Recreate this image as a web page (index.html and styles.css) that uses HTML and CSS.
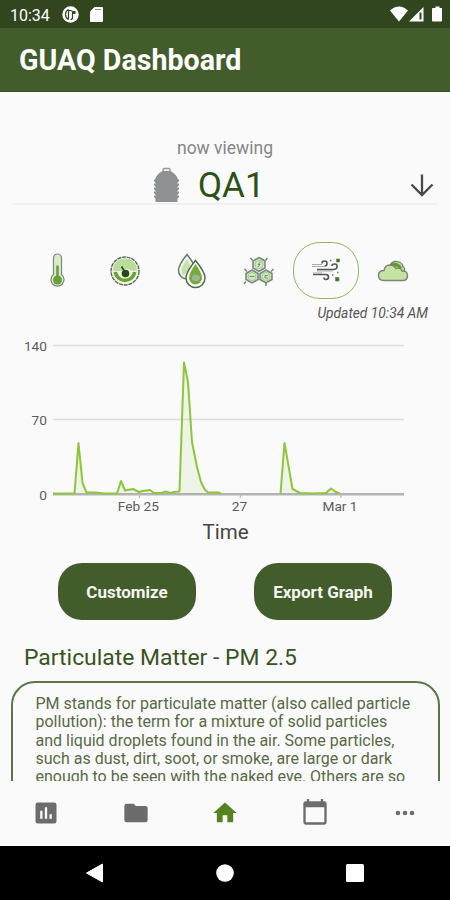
FILE: index.html
```html
<!DOCTYPE html>
<html lang="en">

<head>
    <meta charset="utf-8">
    <title>GUAQ Dashboard</title>
    <link rel="stylesheet" href="styles.css">
</head>

<body>
    <div class="status-bar">
        <span class="clock">10:34</span>
        <svg width="17" height="17" viewBox="0 0 17 17">
            <circle cx="8.500" cy="8.500" r="8.200" fill="#fff" />
            <path d="M6.500 3.500Q3.500 5 3.500 8.500t3 5M6.500 3.500v10M6.500 4.500h2.500q1.500 0 1.500 2v5q0 2-2 2" fill="none" stroke="#31451f" stroke-width="1.200" />
            <path d="M10.500 5h3v3h-3z" fill="#31451f" />
        </svg>
        <svg class="sd" width="13" height="15" viewBox="0 0 13 15">
            <path d="M4.500 0H12a1 1 0 0 1 1 1v13a1 1 0 0 1-1 1H1a1 1 0 0 1-1-1V4.500z" fill="#fff" />
            <path d="M5 2.500h6" stroke="#8b977f" stroke-width="1" />
        </svg>
        <svg class="signals" width="52" height="17" viewBox="0 0 52 17">
            <path d="M0 4.500Q9 -3.500 18 4.500L9 15.500z" fill="#fff" />
            <path d="M33.500 1v14.500H19z" fill="#fff" />
            <path d="M30.500 6.500v7" stroke="#31451f" stroke-width="2" />
            <path d="M43 2h2.500V.5h4V2H52v12.500a1 1 0 0 1-1 1h-8a1 1 0 0 1-1-1V3a1 1 0 0 1 1-1z" fill="#fff" />
        </svg>
    </div>

    <header class="app-bar">
        <h1>GUAQ Dashboard</h1>
    </header>

    <main class="content">
        <p class="viewing">now viewing</p>
        <div class="sensor">
            <svg class="sensor-icon" width="27" height="36" viewBox="0 0 27 36">
                <path d="M10 4.500V3q0-1.500 1.500-1.500h4Q17 1.500 17 3v1.500" fill="none" stroke="#97999b" stroke-width="1.500" />
                <path d="M9.500 4h8q6 3 7.500 8.500h1v1.500l-2 2.500h2V18l-2 2.500h2V22l-2 2.500h2V26l-2 2.500h2V30l-1.500 1.500V35h-22v-3.500L1 30v-1.500h2L1 26v-1.500h2L1 22v-1.500h2L1 18v-1.500h2L1 14v-1.500h1Q3.500 7 9.500 4z" fill="#8e9194" />
            </svg>
            <span class="sensor-name">QA1</span>
            <svg class="arrow" width="24" height="24" viewBox="0 0 24 24">
                <path d="M12 1.500v20M1.500 11.500L12 22l10.500-10.500" fill="none" stroke="#4a4a4a" stroke-width="2.300" />
            </svg>
        </div>

        <div class="metrics">
            <div class="metric">
                <!-- temperature -->
                <svg width="32" height="38" viewBox="0 0 32 38">
                    <path d="M11.500 22.500V6a4 4 0 0 1 8 0v16.500a6.500 6.500 0 1 1-8 0z" fill="#dcebc9" stroke="#7d877a" stroke-width="1.200" />
                    <path d="M15.500 13.500V27" stroke="#68a13a" stroke-width="2.600" />
                    <circle cx="15.500" cy="28" r="4.500" fill="#68a13a" />
                </svg>
            </div>
            <div class="metric">
                <!-- pressure gauge -->
                <svg width="32" height="32" viewBox="0 0 32 32">
                    <circle cx="16" cy="16" r="14" fill="#eef5e6" stroke="#59645a" stroke-width="1.400" stroke-dasharray="4 .8" />
                    <path d="M4 15.500a12 12 0 0 1 24 0q-6 1-10-2-6 4-14 2z" fill="#b9dc9a" />
                    <path d="M6.300 17a9.800 9.800 0 0 0 19.400 0" fill="none" stroke="#68a52f" stroke-width="3.600" />
                    <circle cx="16.500" cy="18.500" r="3.800" fill="#28481b" />
                    <path d="M16.500 18L12.500 11.500" stroke="#28481b" stroke-width="1.600" />
                </svg>
            </div>
            <div class="metric">
                <!-- humidity -->
                <svg width="32" height="38" viewBox="0 0 32 38">
                    <path d="M11 2.500Q2.500 13 2.500 18.500a8.500 8.500 0 0 0 17 0Q19.500 13 11 2.500z" fill="#f4f8ee" stroke="#68776a" stroke-width="1.500" />
                    <path d="M11 7Q5 15 5.300 19q.3 3 2.200 4.500Q14 18 14 12z" fill="#c5e1ad" />
                    <path d="M19.500 8.500Q10 20 10 26a9.500 9.500 0 0 0 19 0Q29 20 19.500 8.500z" fill="#fff" stroke="#526653" stroke-width="1.500" />
                    <path d="M19.500 12Q13 21 13 26a6.500 6.500 0 0 0 13 0Q26 21 19.500 12z" fill="#72ae35" />
                    <path d="M16 24.500q2-3 4.500-1.500 4 0 3.500 3.500-1 3-4 2.500-5 .5-4-4.500z" fill="#a2b39b" />
                </svg>
            </div>
            <div class="metric">
                <!-- compounds -->
                <svg width="32" height="32" viewBox="0 0 32 32">
                    <g fill="#d5e8c6" stroke="#76847a" stroke-width="1.500">
                        <path d="M9.500 5.500L7.500 3M22.500 5.500l2-2.500M4 16.500L1.500 14M28 16.500l2.500-2.500M3 26.500L1 29M23 27.500V31" />
                        <path d="M16 2.500l6 3.500v7l-6 3.500-6-3.500V6z" />
                        <path d="M9 15l6 3.500v6L9 28l-6-3.500v-6z" />
                        <path d="M23 15l6 3.500v6L23 28l-6-3.500v-6z" />
                    </g>
                    <g fill="none" stroke="#a3c98b" stroke-width="1">
                        <circle cx="16" cy="9.500" r="4" />
                        <circle cx="9" cy="21.500" r="4" />
                        <circle cx="23" cy="21.500" r="4" />
                    </g>
                    <path d="M17.500 7L15 9.500h2L15 12M6.500 21.500h5M25 20.500h-3v2.500h3" fill="none" stroke="#6f8d64" stroke-width="1" />
                </svg>
            </div>
            <div class="metric selected">
                <!-- particulate matter -->
                <svg width="30" height="26" viewBox="0 0 30 26">
                    <g fill="none" stroke="#4d5752" stroke-width="1.600">
                        <path d="M2 16.500h12.500q3 0 3 2.500t-2.500 2.500q-2 0-2-2" />
                        <path d="M6 11.500h16q4 0 4-3t-3-2.500q-2 0-2 2" />
                        <path d="M11 5.500q0-2.500 2.500-2.500t2.500 2.500-2.500 2.500" />
                    </g>
                    <path d="M1 6.500h10M1 8.500h13M6 13h16M2 15h9" fill="none" stroke="#a5ada8" stroke-width="1.200" />
                    <path d="M25.500 1h3v3h-3zM24.500 19.500h3.500V23h-3.500z" fill="#39751d" stroke="#6e8b61" stroke-width=".8" />
                    <path d="M19 2.500h1.500M21 17h1.500M26 14.500h1.500" stroke="#637961" stroke-width="1.500" />
                </svg>
            </div>
            <div class="metric">
                <!-- clouds -->
                <svg width="32" height="24" viewBox="0 0 32 24">
                    <path d="M13 7q1.500-5 7-4.500 5 .5 6 5 2 1 1.500 5H14z" fill="#bddc9a" stroke="#727d70" stroke-width="1.200" />
                    <path d="M14 6q6-3 10 3" stroke="#619c2d" stroke-width="2.200" fill="none" />
                    <path d="M7 21.500q-5.500 0-5.500-5T7 11.500q1-5.500 6-5.500 4 0 6 3.500 5-1.500 6 2.500 5.500-.5 5.500 4.700 0 4.800-5 4.800z" fill="#c5e4a4" stroke="#7a8478" stroke-width="1.400" />
                    <path d="M17 7q4-1.500 6 3" stroke="#619c2d" stroke-width="1.500" fill="none" />
                </svg>
            </div>
        </div>
        <p class="updated">Updated 10:34 AM</p>

        <svg class="chart" width="450" height="220" viewBox="0 0 450 220">
            <g stroke="#dedede" stroke-width="1.500">
                <path d="M53 15.500h351M53 89.500h351" />
            </g>
            <path d="M53 164.200h351" stroke="#b3b3b3" stroke-width="2.400" />
            <path d="M139.500 164v4M240.300 164v4M341 164v4" stroke="#bdbdbd" stroke-width="1.300" />
            <path class="area" d="M53 163.500H74.500L78.500 113L82.500 153L86.500 162.500H96L104 163.500H117L121 151L125 161L133 159L139 162L148 160L153 163H161L166 161.500L170 163L179.500 161.500L184 32L188 52L192 112L197 137L201 152L205 160L208 162.500H218L221 163.500H280.500L284.500 113L292.500 159L300 163H326L331 158.500L338 163.500z" />
            <path class="line" d="M53 163.500H74.500L78.500 113L82.500 153L86.500 162.500H96L104 163.500H117L121 151L125 160.500L133 159L139 162L143 161L150 160L154 163H161L166 161.500L170 163L174 162L179.500 161.500L184 32.500L188 52L192 112L197 137L201 152L205 160L208 162.500H218L221 163.500M280.500 163.500L284.500 113L292.500 159L300 163L313 163.500L326 163L331 158.500L335 161.500L339.500 163.500" />
            <g class="tick" text-anchor="end">
                <text x="47" y="20.500">140</text>
                <text x="47" y="94.500">70</text>
                <text x="47" y="169.500">0</text>
            </g>
            <g class="tick" text-anchor="middle">
                <text x="138.300" y="181">Feb 25</text>
                <text x="239.500" y="181">27</text>
                <text x="340" y="181">Mar 1</text>
            </g>
            <text class="axis-title" x="225.500" y="209" text-anchor="middle">Time</text>
        </svg>

        <div class="buttons">
            <button type="button">Customize</button>
            <button type="button">Export Graph</button>
        </div>

        <h2>Particulate Matter - PM 2.5</h2>
        <div class="info">
            PM stands for particulate matter (also called particle<br>
            pollution): the term for a mixture of solid particles<br>
            and liquid droplets found in the air. Some particles,<br>
            such as dust, dirt, soot, or smoke, are large or dark<br>
            enough to be seen with the naked eye. Others are so
        </div>
    </main>

    <nav class="tabs">
        <svg width="28" height="28" viewBox="0 0 24 24">
            <path d="M19 3H5a2 2 0 0 0-2 2v14a2 2 0 0 0 2 2h14a2 2 0 0 0 2-2V5a2 2 0 0 0-2-2zM9 17H7v-7h2v7zm4 0h-2V7h2v10zm4 0h-2v-4h2v4z" />
        </svg>
        <svg width="28" height="28" viewBox="0 0 24 24">
            <path d="M10 4H4a2 2 0 0 0-2 2v12a2 2 0 0 0 2 2h16a2 2 0 0 0 2-2V8a2 2 0 0 0-2-2h-8z" />
        </svg>
        <svg class="active" width="28" height="28" viewBox="0 0 24 24">
            <path d="M10 20v-6h4v6h5v-8h3L12 3 2 12h3v8z" />
        </svg>
        <svg width="28" height="28" viewBox="0 0 24 24">
            <path d="M20 2h-1V0h-2v2H7V0H5v2H4a2 2 0 0 0-2 2v16a2 2 0 0 0 2 2h16a2 2 0 0 0 2-2V4a2 2 0 0 0-2-2zm0 18H4V7h16z" />
        </svg>
        <svg width="28" height="28" viewBox="0 0 24 24">
            <path d="M6 10a2 2 0 1 0 0 4 2 2 0 0 0 0-4zm12 0a2 2 0 1 0 0 4 2 2 0 0 0 0-4zm-6 0a2 2 0 1 0 0 4 2 2 0 0 0 0-4z" />
        </svg>
    </nav>

    <div class="system-nav">
        <svg width="20" height="20" viewBox="0 0 20 20"><path d="M17.500 1v18L1.500 10z" stroke-width="1" stroke="#fff" stroke-linejoin="round" /></svg>
        <svg width="20" height="20" viewBox="0 0 20 20"><circle cx="10" cy="10" r="8.800" /></svg>
        <svg width="20" height="20" viewBox="0 0 20 20"><rect x="1" y="1" width="18" height="18" rx="1.500" /></svg>
    </div>
</body>

</html>
```

FILE: styles.css
```css
* {
    box-sizing: border-box;
}

body {
    margin: 0;
    height: 900px;
    display: flex;
    flex-direction: column;
    overflow: hidden;
    font-family: Roboto, sans-serif;
    background-color: #fafafa;
}

svg {
    display: block;
    flex-shrink: 0;
}

h1,
h2,
p {
    margin: 0;
}

.status-bar {
    display: flex;
    align-items: center;
    height: 28px;
    padding: 1px 8px 0 10px;
    background-color: #31451f;
    color: #fff;
}

.clock {
    width: 52px;
    padding-top: 1px;
    font-size: 16px;
}

.sd {
    margin-left: 11px;
}

.signals {
    margin-left: auto;
}

.app-bar {
    display: flex;
    align-items: center;
    height: 64px;
    padding: 1px 0 0 19px;
    background-color: #435c2b;
    border-bottom: 1px solid #344d1d;
}

h1 {
    font-size: 28.600px;
    font-weight: bold;
    color: #fff;
}

.content {
    height: 689px;
    overflow: hidden;
}

.viewing {
    padding-top: 46px;
    height: 75px;
    font-size: 17.500px;
    line-height: 20px;
    text-align: center;
    color: #858585;
}

.sensor {
    display: flex;
    align-items: center;
    height: 38px;
    margin: 0 12px;
    padding: 0 4px 0 141px;
    border-bottom: 2px solid #f0f0f0;
}

.sensor-name {
    margin-left: 18px;
    padding-top: 2px;
    font-size: 35px;
    line-height: 36px;
    color: #2d5016;
}

.arrow {
    margin-left: auto;
}

.metrics {
    display: grid;
    grid-template-columns: repeat(6, 1fr);
    margin: 37px 23px 0 24px;
}

.metric {
    display: flex;
    align-items: center;
    justify-content: center;
    height: 57px;
}

.selected {
    border: 1px solid #94b65c;
    border-radius: 27px;
    margin: 0 1px 0 0;
}

.updated {
    padding: 6px 22px 0 0;
    height: 31px;
    font-size: 13.800px;
    font-style: italic;
    line-height: 17px;
    text-align: right;
    color: #555;
}

.area {
    fill: #8bc34a;
    fill-opacity: 0.1;
}

.line {
    fill: none;
    stroke: #8dc63a;
    stroke-width: 2;
    stroke-linejoin: round;
}

.tick {
    font-size: 13.700px;
    fill: #5c5c5c;
}

.axis-title {
    font-size: 20.500px;
    fill: #444;
}

.buttons {
    display: flex;
    justify-content: space-between;
    margin: 13px 58px 0 58px;
}

button {
    width: 138px;
    height: 57px;
    padding: 0;
    border: none;
    border-radius: 24px;
    background-color: #435c2b;
    color: #f4f7f0;
    font-family: inherit;
    font-size: 17px;
    font-weight: bold;
}

h2 {
    padding: 24px 0 0 24px;
    height: 61px;
    font-size: 22.900px;
    font-weight: normal;
    line-height: 28px;
    color: #38531f;
}

.info {
    margin: 0 10px 0 11px;
    height: 200px;
    padding: 12px 0 0 22.500px;
    border: 2px solid #5d7448;
    border-radius: 24px;
    font-size: 16px;
    line-height: 18.300px;
    white-space: nowrap;
    color: #566a43;
}

.tabs {
    display: grid;
    grid-template-columns: repeat(5, 1fr);
    align-items: center;
    justify-items: center;
    height: 65px;
    padding: 0 0 2px 1px;
    background-color: #fafafa;
    fill: #6c6c6c;
}

.active {
    fill: #558320;
}

.system-nav {
    display: flex;
    justify-content: space-between;
    align-items: center;
    height: 54px;
    padding: 0 85px;
    background-color: #000;
    fill: #fff;
}
```
